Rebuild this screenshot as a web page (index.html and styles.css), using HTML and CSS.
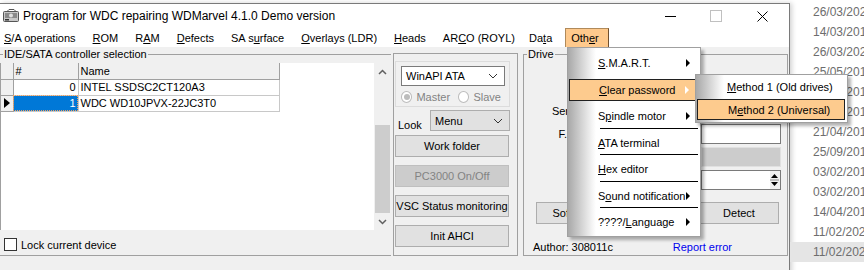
FILE: index.html
```html
<!DOCTYPE html>
<html lang="en">
<head>
    <meta charset="UTF-8">
    <title>Program for WDC repairing WDMarvel 4.1.0 Demo version</title>
    <link rel="stylesheet" href="styles.css">
</head>
<body>
<div class="screen">

    <div class="window">
        <div class="titlebar">
            <svg class="app-icon" width="16" height="14" viewBox="0 0 16 14">
                <rect x="0.5" y="2.5" width="15" height="10" rx="1" fill="#c8c8c8" stroke="#555"/>
                <rect x="2" y="4" width="12" height="5" fill="#8a8a8a"/>
                <circle cx="8" cy="6.5" r="2" fill="#e0e0e0"/>
                <rect x="2" y="10" width="4" height="1.5" fill="#333"/>
                <path d="M4 2.5 L6 0.5 H11 L13 2.5" fill="none" stroke="#555"/>
            </svg>
            <span class="title">Program for WDC repairing WDMarvel 4.1.0 Demo version</span>
            <div class="caption">
                <span class="cap cap-min"></span>
                <span class="cap cap-max"></span>
                <span class="cap cap-close">
                    <svg width="11" height="11" viewBox="0 0 11 11"><path d="M0.5 0.5 L10.5 10.5 M10.5 0.5 L0.5 10.5" stroke="#000" stroke-width="1"/></svg>
                </span>
            </div>
        </div>

        <div class="menubar">
            <span class="mi"><u>S</u>/A operations</span>
            <span class="mi"><u>R</u>OM</span>
            <span class="mi">R<u>A</u>M</span>
            <span class="mi"><u>D</u>efects</span>
            <span class="mi">SA s<u>u</u>rface</span>
            <span class="mi"><u>O</u>verlays (LDR)</span>
            <span class="mi"><u>H</u>eads</span>
            <span class="mi">AR<u>C</u>O (ROYL)</span>
            <span class="mi">Da<u>t</u>a</span>
            <span class="mi mi-open">Oth<u>e</u>r</span>
        </div>

        <div class="client">
            <fieldset class="group controllers">
                <legend>IDE/SATA controller selection</legend>
                <div class="grid-box">
                    <div class="grid">
                        <table>
                            <tr class="head">
                                <td class="ind"></td>
                                <td class="num">#</td>
                                <td class="name">Name</td>
                            </tr>
                            <tr>
                                <td class="ind"></td>
                                <td class="num right">0</td>
                                <td class="name">INTEL SSDSC2CT120A3</td>
                            </tr>
                            <tr class="current">
                                <td class="ind"><span class="pointer"></span></td>
                                <td class="num right selected"><span>1</span></td>
                                <td class="name">WDC WD10JPVX-22JC3T0</td>
                            </tr>
                        </table>
                    </div>
                    <div class="vscroll">
                        <span class="sb-arrow">
                            <svg width="9" height="6" viewBox="0 0 9 6"><path d="M1 5 L4.5 1.5 L8 5" fill="none" stroke="#606060" stroke-width="1.5"/></svg>
                        </span>
                        <span class="sb-track"></span>
                        <span class="sb-thumb"></span>
                        <span class="sb-arrow">
                            <svg width="9" height="6" viewBox="0 0 9 6"><path d="M1 1 L4.5 4.5 L8 1" fill="none" stroke="#606060" stroke-width="1.5"/></svg>
                        </span>
                    </div>
                </div>
                <div class="lock">
                    <span class="checkbox"></span>
                    <span>Lock current device</span>
                </div>
            </fieldset>

            <div class="panel mid">
                <div class="port-box">
                    <div class="combo">
                        <span>WinAPI ATA</span>
                        <svg width="10" height="6" viewBox="0 0 10 6"><path d="M1 1 L5 5 L9 1" fill="none" stroke="#333" stroke-width="1"/></svg>
                    </div>
                    <div class="radios">
                        <span class="radio checked"></span><span class="radio-label">Master</span>
                        <span class="radio"></span><span class="radio-label">Slave</span>
                    </div>
                </div>
                <div class="look-row">
                    <span class="look-label">Look</span>
                    <div class="combo combo-gray">
                        <span>Menu</span>
                        <svg width="10" height="6" viewBox="0 0 10 6"><path d="M1 1 L5 5 L9 1" fill="none" stroke="#333" stroke-width="1"/></svg>
                    </div>
                </div>
                <div class="btn">Work folder</div>
                <div class="btn disabled">PC3000 On/Off</div>
                <div class="btn">VSC Status monitoring</div>
                <div class="btn">Init AHCI</div>
            </div>

            <fieldset class="group drive">
                <legend>Drive</legend>
                <div class="drive-rows">
                    <div class="drive-row"><span class="dlabel"></span><span class="field"></span></div>
                    <div class="drive-row"><span class="dlabel">Serial</span><span class="field"></span></div>
                    <div class="drive-row"><span class="dlabel">F.W.</span><span class="field"></span></div>
                    <div class="drive-row"><span class="dlabel"></span><span class="field field-gray"></span></div>
                    <div class="drive-row">
                        <span class="dlabel"></span>
                        <span class="field spin-field">
                            <span class="spin">
                                <svg width="9" height="16" viewBox="0 0 9 16"><path d="M1 6 L4.5 2 L8 6 Z M1 10 L4.5 14 L8 10 Z" fill="#000"/><path d="M0 8 H9" stroke="#888"/></svg>
                            </span>
                        </span>
                    </div>
                </div>
                <div class="drive-buttons">
                    <div class="btn btn-soft">Soft reset</div>
                    <div class="btn btn-detect">Detect</div>
                </div>
                <div class="drive-footer">
                    <span>Author: 308011c</span>
                    <span class="link">Report error</span>
                </div>
            </fieldset>
        </div>
    </div>

    <div class="files">
        <div class="file">26/03/2020</div>
        <div class="file">14/03/2019</div>
        <div class="file">26/03/2020</div>
        <div class="file">25/05/2019</div>
        <div class="file">25/05/2019</div>
        <div class="file">25/05/2019</div>
        <div class="file">21/04/2019</div>
        <div class="file">25/09/2019</div>
        <div class="file">03/02/2019</div>
        <div class="file">03/02/2019</div>
        <div class="file">14/04/2019</div>
        <div class="file">11/02/2020</div>
        <div class="file selected">11/02/2020</div>
    </div>

    <div class="popup other-menu">
        <div class="pm"><span class="pm-text"><u>S</u>.M.A.R.T.</span><span class="arrow"></span></div>
        <div class="pm hot"><span class="pm-text"><u>C</u>lear password</span><span class="arrow arrow-light"></span></div>
        <div class="pm sep"><span class="pm-text">S<u>p</u>indle motor</span><span class="arrow"></span></div>
        <div class="pm sep"><span class="pm-text"><u>A</u>TA terminal</span></div>
        <div class="pm sep"><span class="pm-text"><u>H</u>ex editor</span></div>
        <div class="pm sep"><span class="pm-text">S<u>o</u>und notification</span><span class="arrow"></span></div>
        <div class="pm"><span class="pm-text">????/<u>L</u>anguage</span><span class="arrow"></span></div>
    </div>

    <div class="popup sub-menu">
        <div class="pm"><span class="pm-text"><u>M</u>ethod 1 (Old drives)</span></div>
        <div class="pm hot"><span class="pm-text">M<u>e</u>thod 2 (Universal)</span></div>
    </div>

</div>
</body>
</html>
```

FILE: styles.css
```css
* {
    box-sizing: border-box;
}

body {
    margin: 0;
    font-family: 'Liberation Sans', Arial, sans-serif;
    font-size: 11px;
    color: #000;
    background: #fff;
}

.screen {
    position: relative;
    width: 864px;
    height: 270px;
    overflow: hidden;
    display: flex;
    background: #fff;
}

/* main window */

.window {
    flex: none;
    width: 790px;
    height: 290px;
    margin-top: 3px;
    background: #f0f0f0;
    border-top: 1px solid #7a7a7a;
    border-right: 1px solid #7a7a7a;
    box-shadow: 2px 0 5px rgba(0, 0, 0, 0.18);
    display: flex;
    flex-direction: column;
}

.titlebar {
    height: 24px;
    background: #fff;
    display: flex;
    align-items: center;
    padding-left: 3px;
}

.app-icon {
    flex: none;
}

.title {
    margin-left: 4px;
    font-size: 12px;
    flex: 1;
}

.caption {
    display: flex;
    height: 100%;
    margin-right: 4px;
}

.cap {
    width: 46px;
    display: flex;
    align-items: center;
    justify-content: center;
}

.cap-min::before {
    content: "";
    width: 11px;
    border-top: 1px solid #000;
}

.cap-max::before {
    content: "";
    width: 10px;
    height: 10px;
    border: 1px solid #c0c0c0;
}

.menubar {
    height: 19px;
    background: #fff;
    display: flex;
    align-items: stretch;
}

.mi {
    padding: 0 8px 0 9px;
    display: flex;
    align-items: center;
}

.mi:first-child {
    padding-left: 4px;
}

.mi:nth-child(9) {
    padding-left: 6px;
}

.mi-open {
    padding: 0 9px 0 5px;
    margin-left: 5px;
    background: #fec98c;
    border: 1px solid #b08a5a;
    border-right-color: #705030;
    border-bottom: none;
}

.client {
    flex: 1;
    display: flex;
    align-items: flex-start;
    padding-top: 1px;
}

/* group boxes */

.group {
    margin: 0;
    border: 1px solid #a0a0a0;
    min-width: 0;
}

.group legend {
    padding: 0 1px;
    margin-left: 3px;
    line-height: 13px;
}

.controllers {
    width: 391px;
    height: 208px;
    padding: 2px 0 0 0;
    border-left: none;
    border-right: none;
}

.grid-box {
    height: 167px;
    display: flex;
    border-left: 1px solid #a0a0a0;
}

.grid {
    flex: 1;
    background: #fff;
}

.grid table {
    border-collapse: collapse;
}

.grid td {
    height: 16px;
    padding: 0 2px;
    border-right: 1px solid #c8c8c8;
    border-bottom: 1px solid #c8c8c8;
    white-space: nowrap;
}

.grid .head td {
    background: #f0f0f0;
    border-color: #a0a0a0;
}

.grid .ind {
    width: 12px;
    background: #f0f0f0;
    border-color: #a0a0a0;
    padding: 0;
}

.grid .num {
    width: 65px;
}

.grid .name {
    width: 201px;
}

.grid .right {
    text-align: right;
}

.grid .selected {
    background: #0078d7;
    color: #fff;
    outline: 1px dotted #f0a060;
    outline-offset: -1px;
}

.pointer {
    display: block;
    margin-left: 3px;
    width: 0;
    height: 0;
    border-top: 5px solid transparent;
    border-bottom: 5px solid transparent;
    border-left: 6px solid #000;
}

.vscroll {
    width: 17px;
    flex: none;
    background: #f0f0f0;
    display: flex;
    flex-direction: column;
}

.sb-arrow {
    height: 17px;
    display: flex;
    align-items: center;
    justify-content: center;
}

.sb-track {
    height: 45px;
}

.sb-thumb {
    flex: 1;
    margin: 0 1px;
    background: #cdcdcd;
}

.lock {
    height: 29px;
    display: flex;
    align-items: center;
    padding-left: 4px;
    gap: 4px;
}

.checkbox {
    width: 13px;
    height: 13px;
    border: 1px solid #333;
    background: #fff;
}

/* middle panel */

.panel {
    border: 1px solid #a0a0a0;
}

.mid {
    width: 125px;
    height: 203px;
    margin: 5px 0 0 2px;
    padding: 7px 0 0 1px;
    display: flex;
    flex-direction: column;
}

.port-box {
    width: 115px;
    height: 46px;
    border: 1px solid #dcdcdc;
    padding: 4px 0 0 5px;
}

.combo {
    height: 20px;
    width: 104px;
    background: #fff;
    border: 1px solid #7a7a7a;
    display: flex;
    align-items: center;
    justify-content: space-between;
    padding: 0 6px 0 4px;
}

.radios {
    display: flex;
    align-items: center;
    margin-top: 5px;
    color: #838383;
}

.radio {
    width: 12px;
    height: 12px;
    border-radius: 50%;
    border: 1px solid #bcbcbc;
    background: #fff;
    margin-right: 4px;
    display: flex;
    align-items: center;
    justify-content: center;
}

.radio.checked::after {
    content: "";
    width: 6px;
    height: 6px;
    border-radius: 50%;
    background: #bcbcbc;
}

.radio-label {
    margin-right: 8px;
}

.look-row {
    display: flex;
    align-items: flex-end;
    margin-top: 3px;
    height: 21px;
}

.look-label {
    width: 35px;
    padding-left: 3px;
}

.combo-gray {
    width: 80px;
    height: 21px;
    background: #e1e1e1;
    border-color: #adadad;
}

.btn {
    height: 22px;
    width: 114px;
    margin-top: 8px;
    background: #e1e1e1;
    border: 1px solid #adadad;
    display: flex;
    align-items: center;
    justify-content: center;
    white-space: nowrap;
}

.look-row + .btn {
    margin-top: 4px;
}

.btn.disabled {
    background: #cccccc;
    border-color: #bfbfbf;
    color: #838383;
}

/* drive group */

.drive {
    width: 265px;
    height: 208px;
    margin-left: 5px;
    padding: 0 2px 0 0;
    display: flex;
    flex-direction: column;
}

.drive-rows {
    display: flex;
    flex-direction: column;
    gap: 2px;
    padding-top: 16px;
}

.drive-row {
    display: flex;
    align-items: center;
    height: 21px;
}

.dlabel {
    width: 60px;
    text-align: right;
    padding-right: 4px;
}

.field {
    flex: 1;
    height: 20px;
    margin-left: 117px;
    margin-right: 4px;
    background: #fff;
    border: 1px solid #7a7a7a;
}

.field-gray {
    background: #cccccc;
    border-color: #e0e0e0;
}

.spin-field {
    display: flex;
    justify-content: flex-end;
}

.spin {
    width: 10px;
    display: flex;
    align-items: center;
    background: #f0f0f0;
}

.drive-buttons {
    display: flex;
    justify-content: space-between;
    padding: 12px 6px 0 12px;
}

.drive-buttons .btn {
    width: 80px;
    margin-top: 0;
}

.drive-footer {
    display: flex;
    justify-content: space-between;
    padding: 17px 53px 0 9px;
}

.link {
    color: #0000ee;
}

/* files list behind the window */

.files {
    flex: 1;
    padding: 2px 0 0 23px;
    font-size: 12px;
    color: #6d6d6d;
}

.file {
    height: 20px;
    line-height: 20px;
    white-space: nowrap;
}

.file.selected {
    background: #e5e5e5;
    margin-left: -23px;
    padding-left: 23px;
}

/* popup menus */

.popup {
    position: absolute;
    background: #fff linear-gradient(to right, #a8a8a8 0, #f4f4f4 24px, #fff 28px);
    border: 1px solid #a0a0a0;
    box-shadow: 3px 3px 3px rgba(0, 0, 0, 0.3);
}

.other-menu {
    left: 567px;
    top: 47px;
    width: 134px;
    padding: 2px 0 0 0;
}

.sub-menu {
    left: 695px;
    top: 74px;
    width: 153px;
    padding: 1px 0 2px 0;
}

.pm {
    position: relative;
    height: 26.5px;
    display: flex;
    align-items: center;
    padding-left: 30px;
}

.sub-menu .pm {
    height: 22px;
    padding-left: 31px;
}

.pm.hot {
    background: #fdcb8e;
    border: 1px solid #202020;
    margin: 2px 0 2px 1px;
    height: 22.5px;
    padding-left: 29px;
}

.sub-menu .pm.hot {
    height: 21px;
    margin: 1px 2px 0 1px;
    padding-left: 30px;
}

.pm.sep::after {
    content: "";
    position: absolute;
    left: 32px;
    right: 2px;
    bottom: 1px;
    border-top: 1px solid #000;
}

.arrow {
    position: absolute;
    right: 10px;
    width: 0;
    height: 0;
    border-top: 4px solid transparent;
    border-bottom: 4px solid transparent;
    border-left: 4px solid #000;
}

.arrow-light {
    border-left-color: #fff;
}
```
